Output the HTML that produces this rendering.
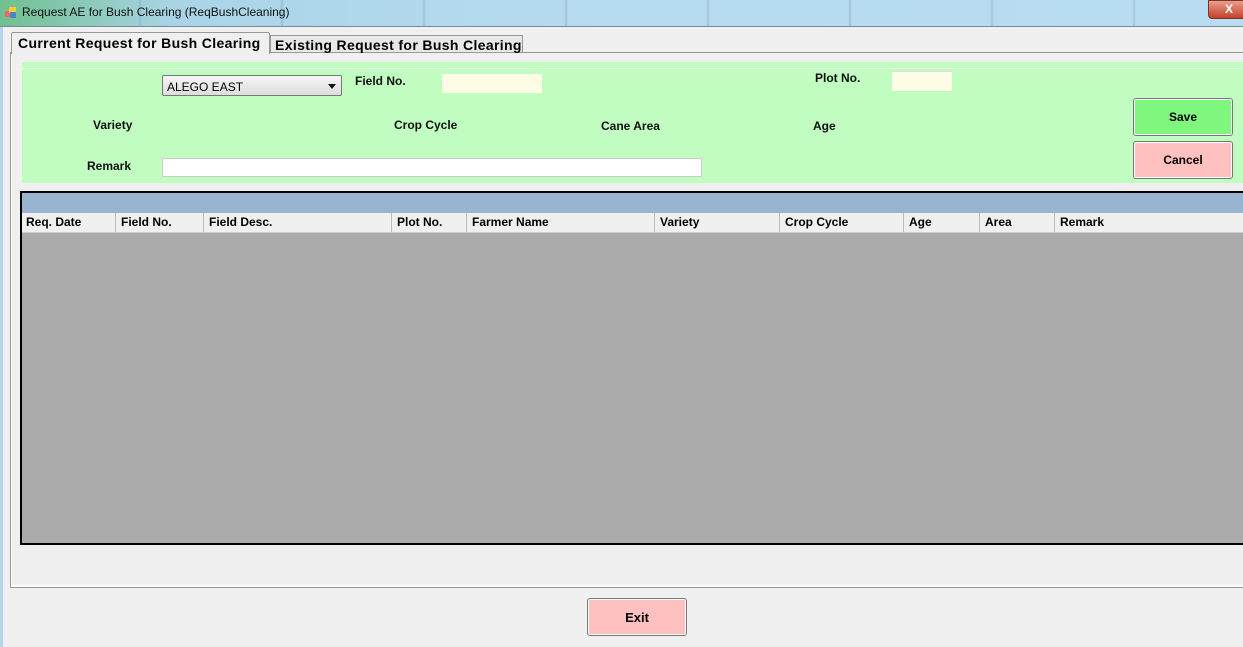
<!DOCTYPE html><html><head><style>
body{margin:0;width:1243px;height:647px;overflow:hidden;background:#f0f0f0;font-family:"Liberation Sans",Arial,sans-serif;position:relative}
.a{position:absolute}
.lb{position:absolute;font-size:12px;font-weight:bold;color:#111}
.col{position:absolute;top:0;height:19px;line-height:19px;font-size:12px;font-weight:bold;border-right:1px solid #bbb;padding-left:5px;box-sizing:border-box}
.btn{position:absolute;border:1px solid #777;border-radius:3px;font-size:12px;font-weight:bold;text-align:center;box-sizing:border-box;box-shadow:inset 0 0 0 1px #fff}
</style></head><body>
<div class="a" style="left:0;top:0;width:1243px;height:27px;background:linear-gradient(90deg,#6fc08e 0,#a9d4e6 14%,#b5daf0 40%,#b9dcf2 100%)"></div>
<div class="a" style="left:0;top:0;width:1243px;height:27px;background:repeating-linear-gradient(90deg,transparent 0,transparent 138px,rgba(120,150,180,.35) 140px,transparent 142px)"></div>
<div class="a" style="left:5px;top:7px;width:11px;height:11px"><div class="a" style="left:0;top:4px;width:6px;height:6px;background:#e66"></div><div class="a" style="left:4px;top:0;width:7px;height:6px;background:#fc3"></div><div class="a" style="left:5px;top:5px;width:6px;height:6px;background:#48c"></div></div>
<div class="a" style="left:22px;top:5px;font-size:12px;color:#111">Request AE for Bush Clearing (ReqBushCleaning)</div>
<div class="a" style="left:1208px;top:0;width:40px;height:17px;background:linear-gradient(#e9a08d,#c4402a);border:1px solid #7a3328;border-radius:0 0 0 4px;color:#fff;font-size:12px;font-weight:bold;text-align:center;line-height:16px">X</div>
<div class="a" style="left:0;top:26px;width:1243px;height:1px;background:#7a8a9a"></div>
<div class="a" style="left:0;top:27px;width:3px;height:620px;background:#b9d3e8"></div>
<div class="a" style="left:10px;top:52px;width:1240px;height:534px;border:1px solid #999;background:#fff"></div>
<div class="a" style="left:12px;top:53px;width:1240px;height:532px;background:#f0f0f0"></div>
<div class="a" style="left:270px;top:35px;width:253px;height:17px;border:1px solid #999;border-bottom:none;background:#e8e8e8;font-size:14px;letter-spacing:.35px;font-weight:bold;padding-left:4px;box-sizing:border-box;line-height:18px;white-space:nowrap">Existing Request for Bush Clearing</div>
<div class="a" style="left:11px;top:32px;width:259px;height:22px;border:1px solid #999;border-bottom:none;border-radius:2px 2px 0 0;background:#f0f0f0;font-size:14px;letter-spacing:.35px;font-weight:bold;padding-left:6px;box-sizing:border-box;line-height:20px;white-space:nowrap">Current Request for Bush Clearing</div>
<div class="a" style="left:22px;top:62px;width:1221px;height:121px;background:#c1fcc1"></div>
<div class="a" style="left:22px;top:68px;width:1221px;height:1px;background:#e8fbe8"></div>
<div class="a" style="left:162px;top:75px;width:180px;height:21px;border:1px solid #777;border-radius:2px;background:linear-gradient(#f6f6f6,#ddd);box-sizing:border-box;font-size:12px;padding:4px 0 0 4px">ALEGO EAST<span class="a" style="right:5px;top:8px;border:4px solid transparent;border-top:5px solid #111;border-bottom:none"></span></div>
<div class="lb" style="left:355px;top:74px">Field No.</div>
<div class="a" style="left:442px;top:74px;width:100px;height:19px;background:#fefee6"></div>
<div class="lb" style="left:815px;top:71px">Plot No.</div>
<div class="a" style="left:892px;top:71px;width:60px;height:19px;background:#fefee6;border-top:1px solid #ddd"></div>
<div class="lb" style="left:93px;top:118px">Variety</div>
<div class="lb" style="left:394px;top:118px">Crop Cycle</div>
<div class="lb" style="left:601px;top:119px">Cane Area</div>
<div class="lb" style="left:813px;top:119px">Age</div>
<div class="lb" style="left:87px;top:159px">Remark</div>
<div class="a" style="left:162px;top:158px;width:540px;height:19px;background:#fff;border:1px solid #ccc;box-sizing:border-box"></div>
<div class="btn" style="left:1133px;top:98px;width:100px;height:38px;background:#7ff77f;line-height:36px">Save</div>
<div class="btn" style="left:1133px;top:141px;width:100px;height:38px;background:#ffc0c0;line-height:36px">Cancel</div>
<div class="a" style="left:20px;top:191px;width:1230px;height:354px;border:2px solid #000;box-sizing:border-box;background:#ababab"></div>
<div class="a" style="left:22px;top:193px;width:1221px;height:20px;background:#99b4d1"></div>
<div class="a" style="left:22px;top:213px;width:1221px;height:20px;background:#f0f0f0;border-bottom:1px solid #ccc;box-sizing:border-box">
<div class="col" style="left:0;width:94px;padding-left:4px">Req. Date</div>
<div class="col" style="left:94px;width:88px">Field No.</div>
<div class="col" style="left:182px;width:188px">Field Desc.</div>
<div class="col" style="left:370px;width:75px">Plot No.</div>
<div class="col" style="left:445px;width:188px">Farmer Name</div>
<div class="col" style="left:633px;width:125px">Variety</div>
<div class="col" style="left:758px;width:124px">Crop Cycle</div>
<div class="col" style="left:882px;width:76px">Age</div>
<div class="col" style="left:958px;width:75px">Area</div>
<div class="col" style="left:1033px;width:200px;border:none">Remark</div>
</div>
<div class="btn" style="left:587px;top:598px;width:100px;height:38px;background:#ffc0c0;line-height:37px;font-size:13px">Exit</div>
</body></html>
